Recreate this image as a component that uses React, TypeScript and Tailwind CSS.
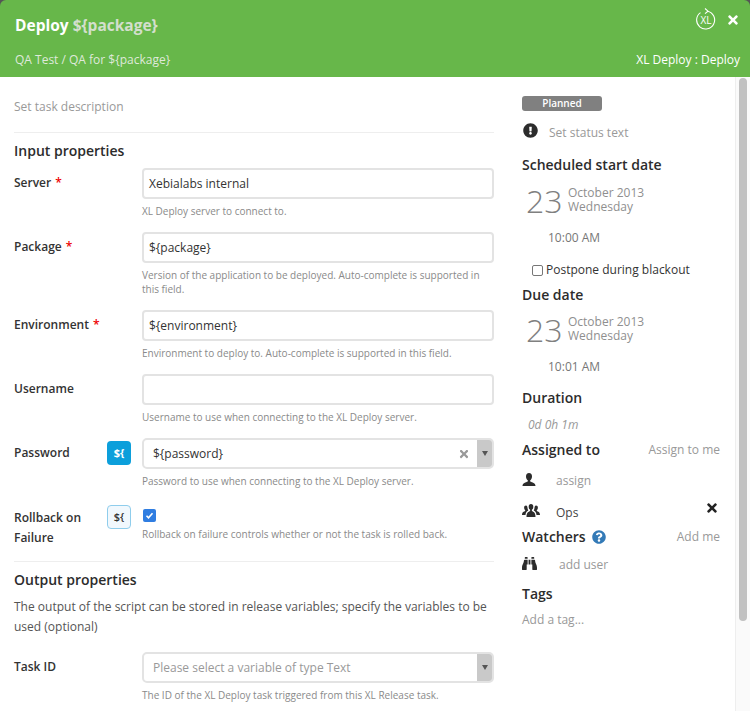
import { FaBinoculars, FaTimes, FaExclamationCircle, FaQuestionCircle } from "react-icons/fa";

function Label({ children, req }: { children: React.ReactNode; req?: boolean }) {
  return (
    <div className="text-[12px] font-semibold leading-[20px] text-[#333]">
      {children}
      {req && <span className="text-[#e00] ml-1">*</span>}
    </div>
  );
}

function Help({ children }: { children: React.ReactNode }) {
  return <div className="text-[10px] leading-[14px] text-[#8a8a8a] mt-[5px]">{children}</div>;
}

function Input({ value }: { value?: string }) {
  return (
    <div className="h-[31px] border-2 border-[#e3e3e3] rounded-[4px] bg-white px-[5px] flex items-center text-[12px] text-[#333]">
      {value}
    </div>
  );
}

function Select({ value, placeholder, clear }: { value?: string; placeholder?: string; clear?: boolean }) {
  return (
    <div className="h-[31px] border-2 border-[#e3e3e3] rounded-[5px] bg-white flex items-center text-[12px] overflow-hidden">
      <div className={`flex-1 pl-[9px] ${placeholder ? "text-[#999]" : "text-[#333]"}`}>{value || placeholder}</div>
      {clear && <FaTimes className="text-[#999] text-[12px] mr-[7px]" />}
      <div className="w-[15px] h-full bg-[#c9c9c9] flex items-center justify-center">
        <div className="w-0 h-0 border-x-[3.5px] border-x-transparent border-t-[5px] border-t-[#555]" />
      </div>
    </div>
  );
}

function Row({ label, req, badge, children, className }: { label: React.ReactNode; req?: boolean; badge?: "solid" | "light"; children: React.ReactNode; className?: string }) {
  return (
    <div className={`flex ${className ?? ""}`}>
      <div className="w-[128px] flex shrink-0">
        <div className={`w-[93px] ${badge === "light" ? "pt-0" : "pt-[5px]"}`}><Label req={req}>{label}</Label></div>
        {badge === "solid" && (
          <div className="mt-[3px] w-[24px] h-[24px] rounded-[4px] bg-[#0c9fdb] text-white text-[11px] font-bold flex items-center justify-center">{"${"}</div>
        )}
        {badge === "light" && (
          <div className="mt-[-3px] w-[24px] h-[24px] rounded-[4px] bg-[#f1f8fd] border border-[#8fcdec] text-[#333] text-[11px] font-semibold flex items-center justify-center">{"${"}</div>
        )}
      </div>
      <div className="flex-1">{children}</div>
    </div>
  );
}

function Heading({ children, className }: { children: React.ReactNode; className?: string }) {
  return <div className={`text-[14px] font-semibold leading-[20px] text-[#2c2c2c] ${className ?? ""}`}>{children}</div>;
}

function DateBlock({ time, top }: { time: string; top: string }) {
  return (
    <div>
      <div className={`flex pl-[4px] ${top}`}>
        <div className="text-[32px] leading-[36px] font-light text-[#808080] w-[42px]">23</div>
        <div className="text-[12px] leading-[14px] text-[#8f8f8f] mt-[3px]">
          <div>October 2013</div>
          <div>Wednesday</div>
        </div>
      </div>
      <div className="pl-[26px] mt-[11px] text-[12px] leading-[16px] text-[#777]">{time}</div>
    </div>
  );
}

export default function App() {
  return (
    <div className="w-[750px] h-[711px] overflow-hidden bg-[#555] flex flex-col" style={{ fontFamily: '"Open Sans", sans-serif' }}>
      <header className="h-[77px] shrink-0 bg-[#67b74a] rounded-t-[6px] pl-[15px] pr-[10px] flex flex-col text-white">
        <div className="flex justify-between h-[50px]">
          <div className="text-[15.5px] font-bold leading-[22px] pt-[14px]">
            Deploy <span className="text-[#d3dfcd]">{"${package}"}</span>
          </div>
          <div className="flex items-start gap-[10px] pt-[8px]">
            <svg width="20" height="22" viewBox="0 0 20 22" fill="none" stroke="#fff" strokeWidth="1.1">
              <path d="M11.500 3.200A9 9 0 1 1 4.500 4.600" />
              <path d="M9 0.500l3 2.700-3 2.500" />
              <text x="10" y="16" textAnchor="middle" fontSize="10" fill="#fff" stroke="none" fontFamily="Open Sans">XL</text>
            </svg>
            <FaTimes className="text-[14px] mt-[5px]" />
          </div>
        </div>
        <div className="flex justify-between text-[12px] leading-[20px]">
          <div className="text-[#dfe9da]">QA Test / QA for {"${package}"}</div>
          <div className="font-medium">XL Deploy : Deploy</div>
        </div>
      </header>
      <div className="flex flex-1 min-h-0 bg-white">
        <main className="w-[480px] ml-[14px] shrink-0">
          <div className="text-[12px] leading-[16px] text-[#999] pt-[22px] pb-[17px] border-b border-[#eee]">Set task description</div>
          <Heading className="mt-[8px]">Input properties</Heading>
          <Row label="Server" req className="mt-[7px]">
            <Input value="Xebialabs internal" />
            <Help>XL Deploy server to connect to.</Help>
          </Row>
          <Row label="Package" req className="mt-[14px]">
            <Input value="${package}" />
            <Help>Version of the application to be deployed. Auto-complete is supported in this field.</Help>
          </Row>
          <Row label="Environment" req className="mt-[14px]">
            <Input value="${environment}" />
            <Help>Environment to deploy to. Auto-complete is supported in this field.</Help>
          </Row>
          <Row label="Username" className="mt-[14px]">
            <Input />
            <Help>Username to use when connecting to the XL Deploy server.</Help>
          </Row>
          <Row label="Password" badge="solid" className="mt-[14px]">
            <Select value="${password}" clear />
            <Help>Password to use when connecting to the XL Deploy server.</Help>
          </Row>
          <Row label={<span className="block leading-[20px]">Rollback on<br />Failure</span>} badge="light" className="mt-[20px]">
            <div className="h-[14px] flex items-center">
              <div className="w-[13px] h-[13px] ml-[1px] rounded-[2px] bg-[#2f7de1] flex items-center justify-center">
                <svg width="9" height="9" viewBox="0 0 9 9" fill="none" stroke="#fff" strokeWidth="1.6"><path d="M1.500 4.800l2 2 4-4.600" /></svg>
              </div>
            </div>
            <Help>Rollback on failure controls whether or not the task is rolled back.</Help>
          </Row>
          <div className="border-b border-[#eee] mt-[13px]" />
          <Heading className="mt-[8px]">Output properties</Heading>
          <div className="text-[12px] leading-[20px] text-[#555] mt-[7px]">The output of the script can be stored in release variables; specify the variables to be used (optional)</div>
          <Row label="Task ID" className="mt-[15px]">
            <Select placeholder="Please select a variable of type Text" />
            <Help>The ID of the XL Deploy task triggered from this XL Release task.</Help>
          </Row>
        </main>
        <aside className="w-[198px] ml-[28px] shrink-0 pt-[19px]">
          <div className="w-[80px] h-[15px] rounded-[3px] bg-[#808080] text-white text-[10px] font-semibold leading-[15px] text-center">Planned</div>
          <div className="flex items-start mt-[11px]">
            <FaExclamationCircle className="text-[15px] text-[#2c2c2c] mt-[1px] ml-[1px]" />
            <div className="ml-[11px] text-[12px] leading-[16px] text-[#999] mt-[3px]">Set status text</div>
          </div>
          <Heading className="mt-[14px]">Scheduled start date</Heading>
          <DateBlock time="10:00 AM" top="mt-[8px]" />
          <label className="flex items-center mt-[16px] ml-[10px] text-[12px] leading-[16px] text-[#333]">
            <span className="w-[11px] h-[11px] border border-[#777] rounded-[2px] bg-white mr-[3px]" />
            Postpone during blackout
          </label>
          <Heading className="mt-[7px]">Due date</Heading>
          <DateBlock time="10:01 AM" top="mt-[7px]" />
          <Heading className="mt-[13px]">Duration</Heading>
          <div className="text-[12px] italic leading-[16px] text-[#999] mt-[9px] ml-[6px]">0d 0h 1m</div>
          <div className="flex justify-between items-center mt-[7px]">
            <Heading>Assigned to</Heading>
            <div className="text-[12px] text-[#999]">Assign to me</div>
          </div>
          <div className="flex items-center mt-[13px] h-[16px]">
            <svg width="14" height="13" viewBox="0 0 14 13" fill="#2c2c2c" className="shrink-0 mt-[-3px]">
              <path d="M7 0C5 0 4 1.400 4 3.400c0 1.800.8 3.200 1.800 3.800v1.300C3.800 9.600.5 9.700.5 13h13c0-3.300-3.300-3.400-5.300-4.500V7.200C9.200 6.600 10 5.200 10 3.400 10 1.400 9 0 7 0z" />
            </svg>
            <div className="ml-[20px] text-[12px] text-[#999]">assign</div>
          </div>
          <div className="flex items-center mt-[16px] h-[16px] relative">
            <svg width="18" height="13" viewBox="0 0 18 13" fill="#2c2c2c" className="shrink-0 mt-[-5px]">
              <path d="M9 0C7.500 0 6.700 1.100 6.700 2.700c0 1.500.6 2.600 1.400 3.100v1.100C6.600 7.800 4.500 8.100 4.500 13h9c0-4.900-2.100-5.200-3.600-6.100V5.800c.8-.5 1.400-1.600 1.400-3.100C11.300 1.100 10.500 0 9 0z" />
              <path d="M4 1.500c-1.200 0-1.900.9-1.900 2.200 0 1.200.5 2.100 1.100 2.500v.8C2 7.600 0 8 0 11h3.500c.2-2.500 1-3.500 2.800-4.600-.4-.6-.6-1.200-.7-2C5.400 2.500 5.100 1.500 4 1.500z" />
              <path d="M14 1.500c1.200 0 1.900.9 1.900 2.200 0 1.200-.5 2.100-1.100 2.500v.8C16 7.600 18 8 18 11h-3.500c-.2-2.500-1-3.500-2.800-4.600.4-.6.6-1.200.7-2 .2-1.900.5-2.900 1.600-2.900z" />
            </svg>
            <div className="ml-[16px] text-[12px] text-[#444]">Ops</div>
            <FaTimes className="absolute right-[1px] top-[-4px] text-[14px] text-[#222]" />
          </div>
          <div className="flex justify-between items-center mt-[6px]">
            <div className="flex items-center">
              <Heading>Watchers</Heading>
              <FaQuestionCircle className="ml-[6px] text-[14px] text-[#337ab7]" />
            </div>
            <div className="text-[12px] text-[#999]">Add me</div>
          </div>
          <div className="flex items-center mt-[10px] h-[16px]">
            <FaBinoculars className="text-[15px] text-[#2c2c2c] w-[15px] mt-[-4px]" />
            <div className="ml-[22px] text-[12px] text-[#999]">add user</div>
          </div>
          <Heading className="mt-[11px]">Tags</Heading>
          <div className="text-[12px] leading-[16px] text-[#999] mt-[8px]">Add a tag...</div>
        </aside>
        <div className="w-[15px] ml-[15px] shrink-0 bg-[#fafafa] border-l border-[#eee] pt-[1px] flex justify-center">
          <div className="w-[8px] h-[543px] rounded-[4px] bg-[#c1c1c1]" />
        </div>
      </div>
    </div>
  );
}
